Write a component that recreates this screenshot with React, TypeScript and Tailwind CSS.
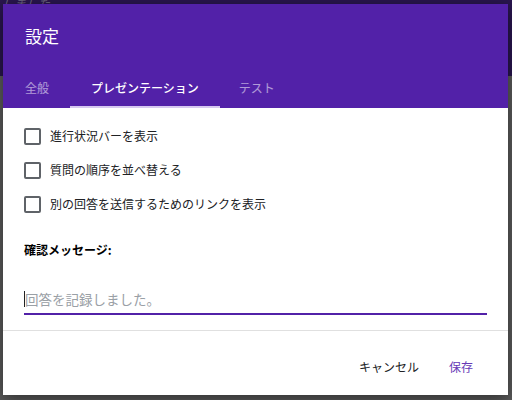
import { useState } from 'react';

const font = { fontFamily: '"Noto Sans CJK JP", "Noto Sans", sans-serif' };

const options = [
  '進行状況バーを表示',
  '質問の順序を並べ替える',
  '別の回答を送信するためのリンクを表示',
];

export default function App() {
  const [checked, setChecked] = useState<boolean[]>([false, false, false]);

  return (
    <div className="relative w-[512px] h-[400px] overflow-hidden bg-[#5c5c5c]" style={font}>
      {/* page behind the overlay */}
      <div className="h-[78px] bg-[#2a1650]">
        <div className="px-[2px] text-[12px] leading-[10px] -mt-[2px] text-[#6d6480] italic">しました</div>
      </div>

      {/* Dialog */}
      <div className="absolute left-[3px] top-[4px] w-[505px] h-[391px] bg-white flex flex-col shadow-[0_4px_16px_rgba(0,0,0,0.5)]">
        {/* Header */}
        <div className="bg-[#5221a8] h-[104px] flex flex-col">
          <div className="pl-[22px] pt-[21px] text-[17px] leading-[22px] text-white">設定</div>
          <div className="mt-auto flex items-end text-[12px] leading-[16px]">
            <div className="pl-[22px] pr-[21px] pb-[12px] text-white/55">全般</div>
            <div className="relative px-[21px] pb-[12px] text-white font-medium">
              プレゼンテーション
              <div className="absolute left-0 right-0 bottom-0 h-[2px] bg-[#d6c8f0]" />
            </div>
            <div className="pl-[19px] pb-[12px] text-white/55">テスト</div>
          </div>
        </div>

        {/* Options */}
        <div className="flex flex-col gap-[16px] pt-[19px] pl-[21px]">
          {options.map((label, i) => (
            <label key={label} className="flex items-center gap-[9px] cursor-pointer">
              <button
                onClick={() => setChecked(c => c.map((v, j) => (j === i ? !v : v)))}
                className={`w-[17px] h-[17px] rounded-[2px] border-2 ${checked[i] ? 'bg-[#673ab7] border-[#673ab7]' : 'border-[#5f6368]'}`}
              />
              <span className="text-[12px] leading-[18px] text-[#202124]">{label}</span>
            </label>
          ))}
        </div>

        <div className="pl-[21px] pt-[28px] text-[12px] leading-[18px] font-bold text-black">確認メッセージ:</div>

        <div className="mx-[21px] mt-[31px] border-b-2 border-[#5221a8] flex items-center pb-[5px]">
          <span className="w-[1px] h-[16px] bg-[#202124]" />
          <span className="text-[13.5px] leading-[18px] text-[#9aa0a6]">回答を記録しました。</span>
        </div>

        <div className="mt-[15px] h-[1px] bg-[#e0e0e0]" />

        <div className="flex-1 flex items-center justify-end pr-[35px] gap-[30px] pt-[8px] text-[12px]">
          <button className="text-[#202124]">キャンセル</button>
          <button className="text-[#673ab7]">保存</button>
        </div>
      </div>
    </div>
  );
}
